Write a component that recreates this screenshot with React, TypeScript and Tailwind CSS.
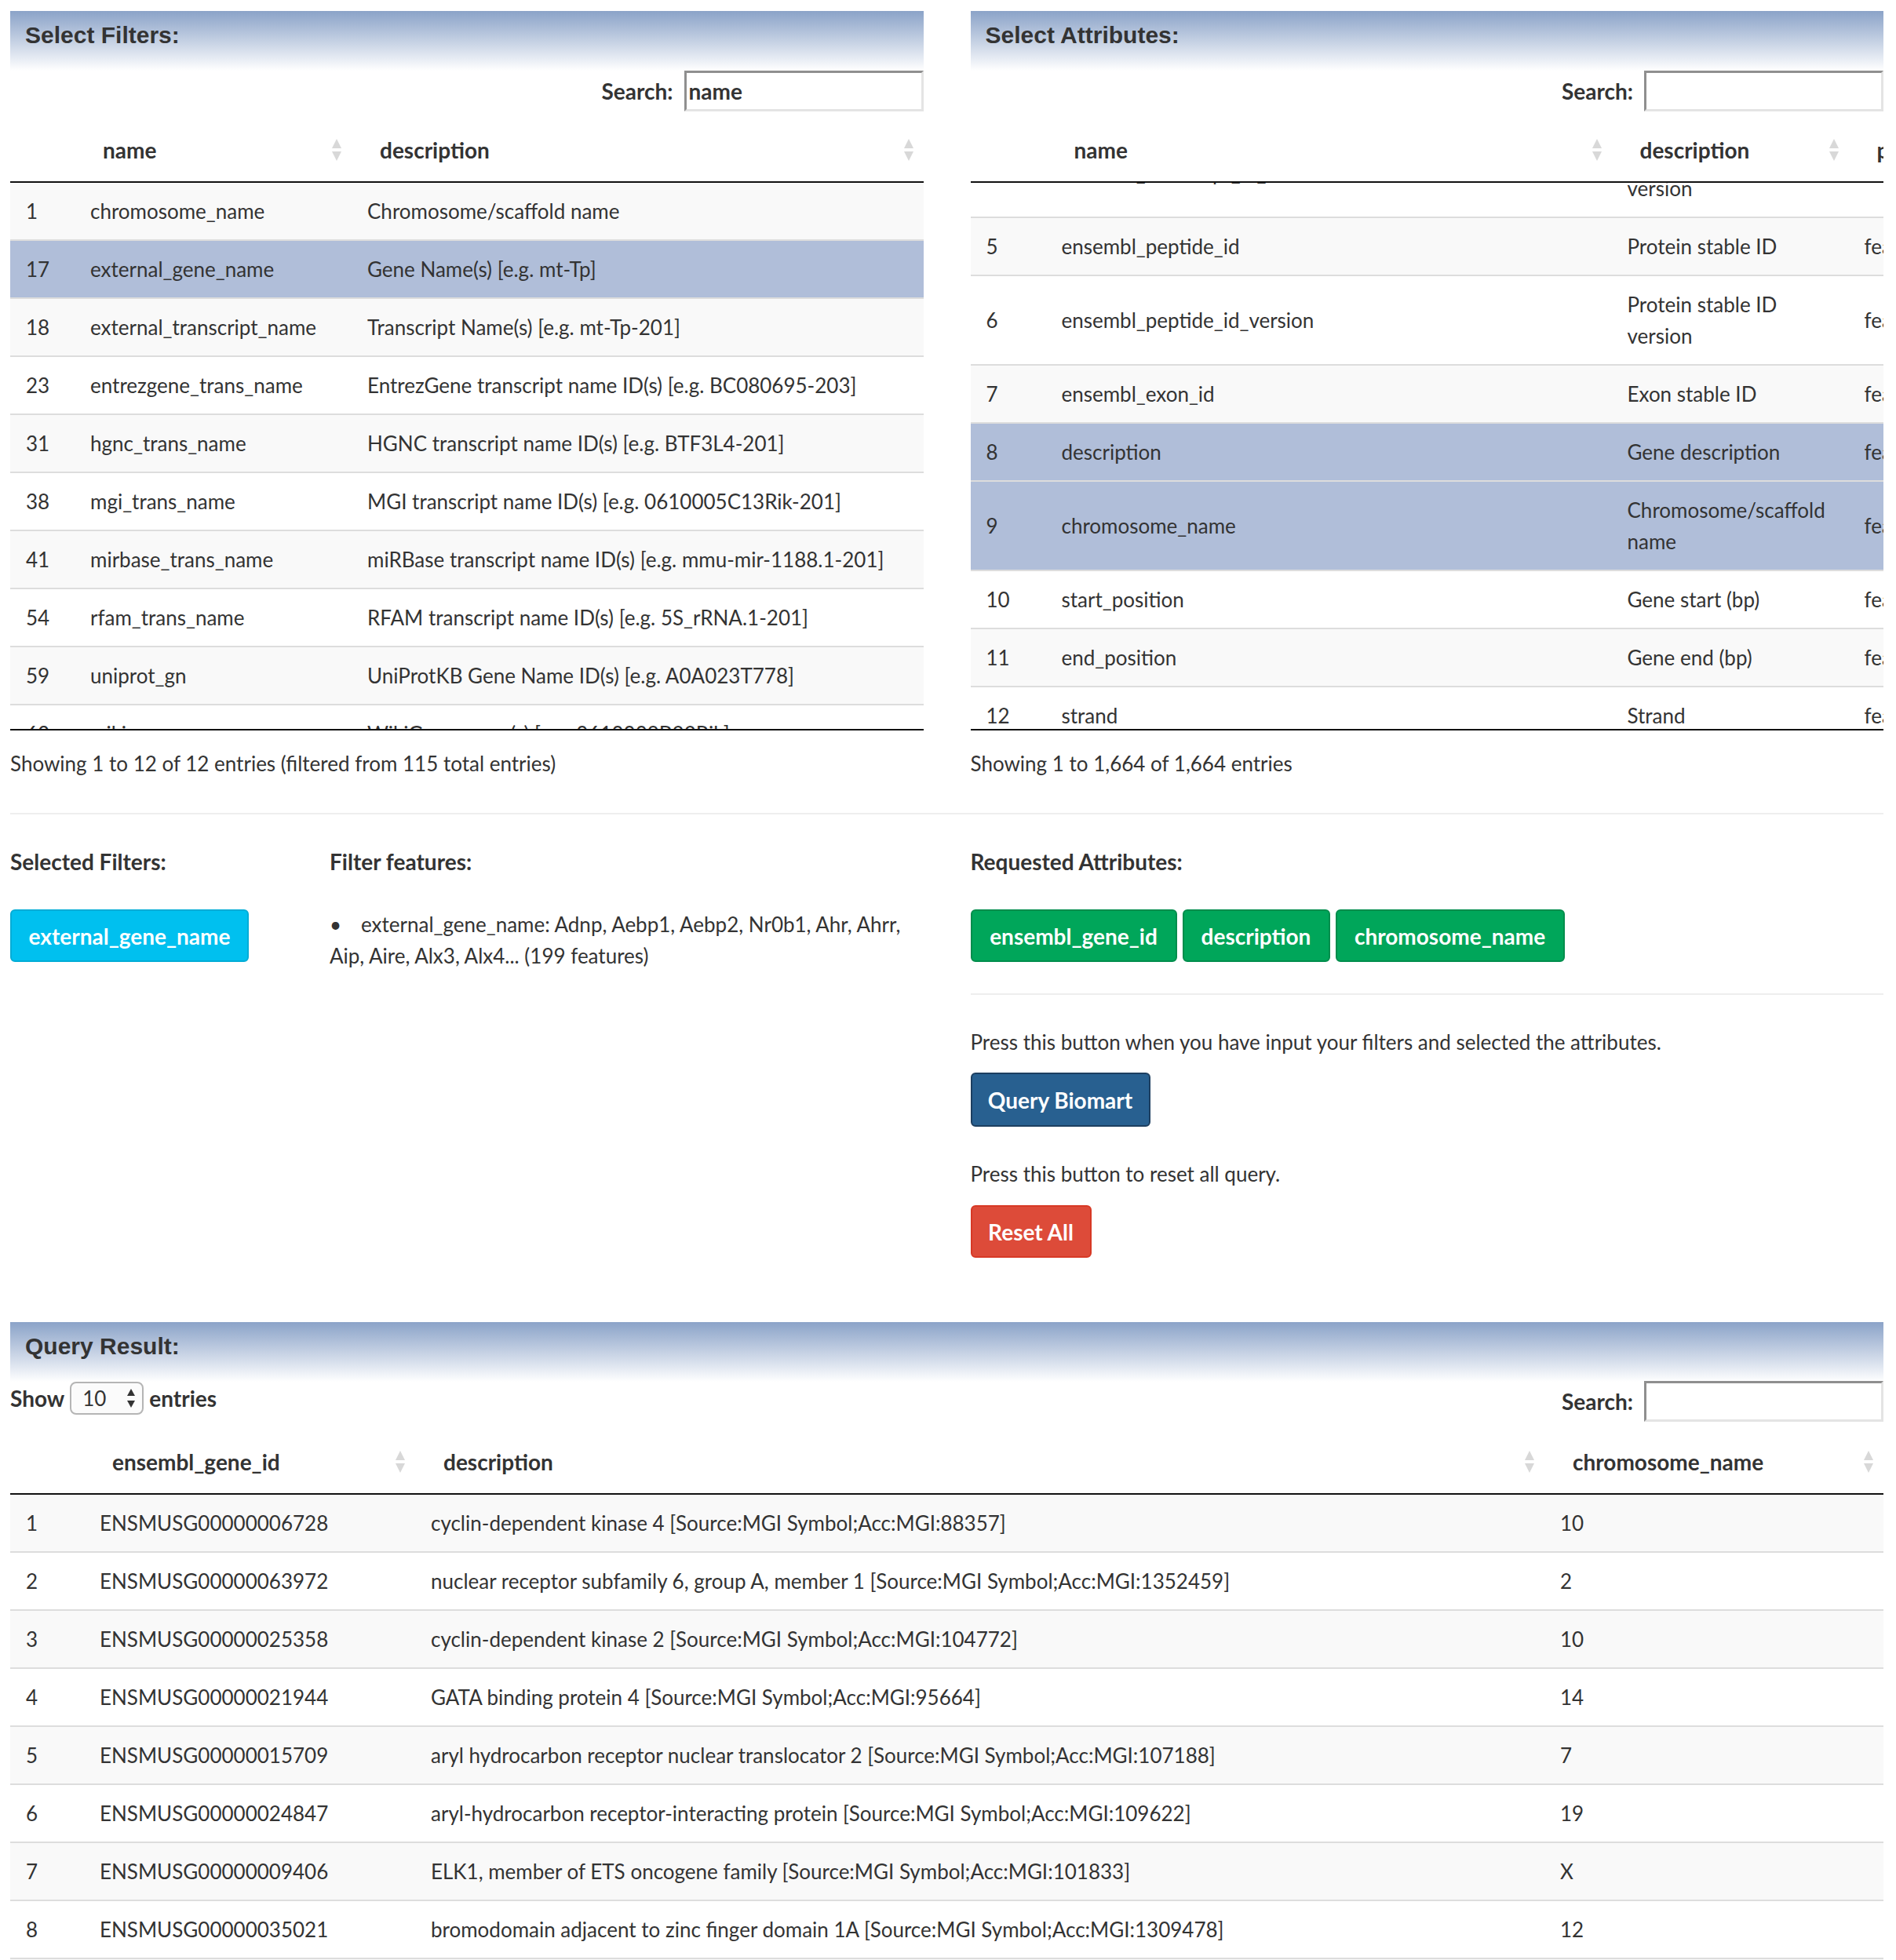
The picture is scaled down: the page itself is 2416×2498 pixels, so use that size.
import React from "react";

type Row = { i: string; a: string; b: React.ReactNode; c?: string; sel?: boolean };

function SortIcon() {
  return (
    <svg width="14" height="30" viewBox="0 0 14 30" className="shrink-0">
      <path d="M7 1 L13 13 L1 13 Z" fill="#d8d8d8" />
      <path d="M1 17 L13 17 L7 29 Z" fill="#d8d8d8" />
    </svg>
  );
}

function Th({ children, icon = true }: { children?: React.ReactNode; icon?: boolean }) {
  return (
    <div className="flex items-center justify-between pl-[36px] pr-[12px] py-5 leading-[40px] font-bold text-[28px] whitespace-nowrap">
      <span>{children}</span>
      {icon ? <SortIcon /> : null}
    </div>
  );
}

function PanelHeader({ title }: { title: string }) {
  return (
    <div className="h-[76px] bg-linear-to-b from-[#8ba3c8] via-[#c4d0e3] to-white pl-[19px] pt-[14px]">
      <h3 className="font-['Liberation_Sans',Arial,sans-serif] font-bold text-[30px] leading-[34px] text-[#333]">
        {title}
      </h3>
    </div>
  );
}

function SearchBox({ value }: { value?: string }) {
  return (
    <div className="flex items-center justify-end gap-[14px] h-[52px]">
      <span className="font-bold text-[28px]">Search:</span>
      <div className="w-[305px] h-[52px] border-[3px] border-t-[#8f8f8f] border-l-[#8f8f8f] border-r-[#e4e4e4] border-b-[#e4e4e4] pl-[3px] flex items-center font-bold text-[28px] bg-white">
        {value}
      </div>
    </div>
  );
}

function rowBg(idx: number, sel?: boolean) {
  if (sel) return "bg-[#b0bed9]";
  return idx % 2 === 0 ? "bg-[#f9f9f9]" : "bg-white";
}

const leftRows: Row[] = [
  { i: "1", a: "chromosome_name", b: "Chromosome/scaffold name" },
  { i: "17", a: "external_gene_name", b: "Gene Name(s) [e.g. mt-Tp]", sel: true },
  { i: "18", a: "external_transcript_name", b: "Transcript Name(s) [e.g. mt-Tp-201]" },
  { i: "23", a: "entrezgene_trans_name", b: "EntrezGene transcript name ID(s) [e.g. BC080695-203]" },
  { i: "31", a: "hgnc_trans_name", b: "HGNC transcript name ID(s) [e.g. BTF3L4-201]" },
  { i: "38", a: "mgi_trans_name", b: "MGI transcript name ID(s) [e.g. 0610005C13Rik-201]" },
  { i: "41", a: "mirbase_trans_name", b: "miRBase transcript name ID(s) [e.g. mmu-mir-1188.1-201]" },
  { i: "54", a: "rfam_trans_name", b: "RFAM transcript name ID(s) [e.g. 5S_rRNA.1-201]" },
  { i: "59", a: "uniprot_gn", b: "UniProtKB Gene Name ID(s) [e.g. A0A023T778]" },
  { i: "63", a: "wikigene_name", b: "WikiGene name(s) [e.g. 0610009B22Rik]" },
];

const rightRows: Row[] = [
  { i: "4", a: "ensembl_transcript_id_version", b: <>Transcript stable ID<br />version</>, c: "feature_page" },
  { i: "5", a: "ensembl_peptide_id", b: "Protein stable ID", c: "feature_page" },
  { i: "6", a: "ensembl_peptide_id_version", b: <>Protein stable ID<br />version</>, c: "feature_page" },
  { i: "7", a: "ensembl_exon_id", b: "Exon stable ID", c: "feature_page" },
  { i: "8", a: "description", b: "Gene description", c: "feature_page", sel: true },
  { i: "9", a: "chromosome_name", b: <>Chromosome/scaffold<br />name</>, c: "feature_page", sel: true },
  { i: "10", a: "start_position", b: "Gene start (bp)", c: "feature_page" },
  { i: "11", a: "end_position", b: "Gene end (bp)", c: "feature_page" },
  { i: "12", a: "strand", b: "Strand", c: "feature_page" },
  { i: "13", a: "transcript_start", b: <>Transcript start<br />(bp)</>, c: "feature_page" },
];

const resultRows: Row[] = [
  { i: "1", a: "ENSMUSG00000006728", b: "cyclin-dependent kinase 4 [Source:MGI Symbol;Acc:MGI:88357]", c: "10" },
  { i: "2", a: "ENSMUSG00000063972", b: "nuclear receptor subfamily 6, group A, member 1 [Source:MGI Symbol;Acc:MGI:1352459]", c: "2" },
  { i: "3", a: "ENSMUSG00000025358", b: "cyclin-dependent kinase 2 [Source:MGI Symbol;Acc:MGI:104772]", c: "10" },
  { i: "4", a: "ENSMUSG00000021944", b: "GATA binding protein 4 [Source:MGI Symbol;Acc:MGI:95664]", c: "14" },
  { i: "5", a: "ENSMUSG00000015709", b: "aryl hydrocarbon receptor nuclear translocator 2 [Source:MGI Symbol;Acc:MGI:107188]", c: "7" },
  { i: "6", a: "ENSMUSG00000024847", b: "aryl-hydrocarbon receptor-interacting protein [Source:MGI Symbol;Acc:MGI:109622]", c: "19" },
  { i: "7", a: "ENSMUSG00000009406", b: "ELK1, member of ETS oncogene family [Source:MGI Symbol;Acc:MGI:101833]", c: "X" },
  { i: "8", a: "ENSMUSG00000035021", b: "bromodomain adjacent to zinc finger domain 1A [Source:MGI Symbol;Acc:MGI:1309478]", c: "12" },
  { i: "9", a: "ENSMUSG00000020184", b: "murine thymoma viral oncogene homolog 1 [Source:MGI Symbol;Acc:MGI:87986]", c: "12" },
  { i: "10", a: "ENSMUSG00000027168", b: "paired box 6 [Source:MGI Symbol;Acc:MGI:97490]", c: "2" },
];

const cell = "px-5 py-4 leading-[40px] whitespace-nowrap";

function LeftPanel() {
  return (
    <div>
      <PanelHeader title="Select Filters:" />
      <SearchBox value="name" />
      <div className="grid grid-cols-[82px_353px_1fr] pt-[9px] border-b-2 border-[#111]">
        <div />
        <Th>name</Th>
        <Th>description</Th>
      </div>
      <div className="h-[698px] overflow-hidden border-b-2 border-[#111]">
        {leftRows.map((r, k) => (
          <div key={r.i} className={`grid grid-cols-[82px_353px_1fr] border-b-2 border-[#ddd] ${rowBg(k, r.sel)}`}>
            <div className={cell}>{r.i}</div>
            <div className={cell}>{r.a}</div>
            <div className={cell}>{r.b}</div>
          </div>
        ))}
      </div>
      <div className="pt-[22px] leading-[40px]">Showing 1 to 12 of 12 entries (filtered from 115 total entries)</div>
    </div>
  );
}

function RightPanel() {
  return (
    <div className="min-w-0">
      <PanelHeader title="Select Attributes:" />
      <SearchBox />
      <div className="overflow-hidden">
        <div className="w-[1419px]">
          <div className="grid grid-cols-[96px_721px_302px_300px] pt-[9px] border-b-2 border-[#111]">
            <div />
            <Th>name</Th>
            <Th>description</Th>
            <Th>page</Th>
          </div>
          <div className="h-[698px] overflow-hidden border-b-2 border-[#111]">
            <div className="-mt-[69px]">
              {rightRows.map((r, k) => (
                <div key={r.i} className={`grid grid-cols-[96px_721px_302px_300px] items-center border-b-2 border-[#ddd] ${rowBg(k + 1, r.sel)}`}>
                  <div className={cell}>{r.i}</div>
                  <div className={cell}>{r.a}</div>
                  <div className={cell}>{r.b}</div>
                  <div className={cell}>{r.c}</div>
                </div>
              ))}
            </div>
          </div>
        </div>
      </div>
      <div className="pt-[22px] leading-[40px]">Showing 1 to 1,664 of 1,664 entries</div>
    </div>
  );
}

function Btn({ children, cls }: { children: React.ReactNode; cls: string }) {
  return (
    <div className={`flex items-center justify-center rounded-[6px] text-white font-bold text-[28px] leading-[40px] ${cls}`}>
      {children}
    </div>
  );
}

function UpDown() {
  return (
    <svg width="12" height="26" viewBox="0 0 12 26">
      <path d="M6 1 L11 10 L1 10 Z" fill="#333" />
      <path d="M1 16 L11 16 L6 25 Z" fill="#333" />
    </svg>
  );
}

export default function App() {
  return (
    <div className="w-[2416px] min-h-[2498px] bg-white text-[#333] font-['Lato',sans-serif] text-[26px] pl-[13px] pr-[16px] pt-[14px] overflow-hidden">
      <div className="grid grid-cols-2 gap-x-[60px]">
        <LeftPanel />
        <RightPanel />
      </div>

      <div className="mt-[43px] h-[2px] bg-[#eeeeee]" />

      <div className="grid grid-cols-2 gap-x-[60px]">
        <div className="grid grid-cols-[407px_1fr]">
          <div>
            <div className="mt-[40px] leading-[40px] font-bold text-[28px]">Selected Filters:</div>
            <Btn cls="mt-[41px] w-[304px] h-[67px] bg-[#00c0ef] border-2 border-[#00acd6]">external_gene_name</Btn>
          </div>
          <div>
            <div className="mt-[40px] leading-[40px] font-bold text-[28px]">Filter features:</div>
            <div className="mt-[40px] leading-[40px]">
              <span className="inline-block w-[40px]">•</span>
              external_gene_name: Adnp, Aebp1, Aebp2, Nr0b1, Ahr, Ahrr,
              <br />
              Aip, Aire, Alx3, Alx4... (199 features)
            </div>
          </div>
        </div>
        <div>
          <div className="mt-[40px] leading-[40px] font-bold text-[28px]">Requested Attributes:</div>
          <div className="mt-[41px] flex gap-[7px]">
            <Btn cls="w-[263px] h-[67px] bg-[#00a65a] border-2 border-[#008d4c]">ensembl_gene_id</Btn>
            <Btn cls="w-[188px] h-[67px] bg-[#00a65a] border-2 border-[#008d4c]">description</Btn>
            <Btn cls="w-[292px] h-[67px] bg-[#00a65a] border-2 border-[#008d4c]">chromosome_name</Btn>
          </div>
          <div className="mt-[40px] h-[2px] bg-[#eeeeee]" />
          <div className="mt-[40px] leading-[40px]">Press this button when you have input your filters and selected the attributes.</div>
          <Btn cls="mt-[19px] w-[229px] h-[69px] bg-[#286090] border-2 border-[#1d3f60]">Query Biomart</Btn>
          <div className="mt-[40px] leading-[40px]">Press this button to reset all query.</div>
          <Btn cls="mt-[20px] w-[154px] h-[67px] bg-[#dd4b39] border-2 border-[#d73925]">Reset All</Btn>
        </div>
      </div>

      <div className="mt-[82px]">
        <PanelHeader title="Query Result:" />
        <div className="flex items-center justify-between h-[50px]">
          <div className="flex items-center font-bold text-[28px] leading-[40px] mb-[8px]">
            <span>Show</span>
            <div className="mx-[7px] w-[94px] h-[42px] rounded-[8px] border-2 border-[#b5b5b5] bg-[#fbfbfb] flex items-center justify-between pl-[14px] pr-[8px] font-normal text-[26px]">
              <span>10</span>
              <UpDown />
            </div>
            <span>entries</span>
          </div>
          <SearchBox />
        </div>
        <div className="grid grid-cols-[94px_422px_1439px_432px] pt-[12px] border-b-2 border-[#111]">
          <div />
          <Th>ensembl_gene_id</Th>
          <Th>description</Th>
          <Th>chromosome_name</Th>
        </div>
        {resultRows.map((r, k) => (
          <div key={r.i} className={`grid grid-cols-[94px_422px_1439px_432px] border-b-2 border-[#ddd] ${rowBg(k)}`}>
            <div className={cell}>{r.i}</div>
            <div className={cell}>{r.a}</div>
            <div className={cell}>{r.b}</div>
            <div className={cell}>{r.c}</div>
          </div>
        ))}
      </div>
    </div>
  );
}
